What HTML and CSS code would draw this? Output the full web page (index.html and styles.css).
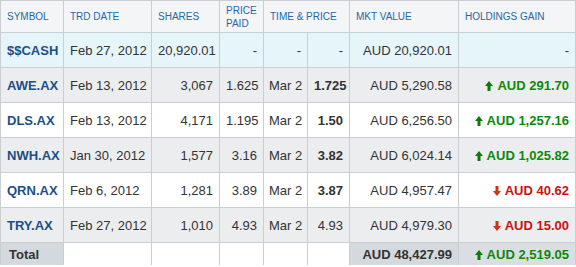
FILE: index.html
```html
<!DOCTYPE html>
<html lang="en">
<head>
  <meta charset="UTF-8">
  <title>Holdings</title>
  <link rel="stylesheet" href="styles.css">
</head>
<body>
  <table class="holdings">
    <colgroup>
      <col style="width:63px">
      <col style="width:88px">
      <col style="width:68px">
      <col style="width:44px">
      <col style="width:44px">
      <col style="width:42px">
      <col style="width:109px">
      <col style="width:117px">
    </colgroup>
    <thead>
      <tr>
        <th>Symbol</th>
        <th>Trd Date</th>
        <th>Shares</th>
        <th class="wrap">Price Paid</th>
        <th colspan="2">Time &amp; Price</th>
        <th>Mkt Value</th>
        <th>Holdings Gain</th>
      </tr>
    </thead>
    <tbody>
      <tr class="cash">
        <td class="sym">$$CASH</td>
        <td>Feb 27, 2012</td>
        <td class="num">20,920.01</td>
        <td class="num">-</td>
        <td class="num">-</td>
        <td class="num">-</td>
        <td class="num">AUD 20,920.01</td>
        <td class="num">-</td>
      </tr>
      <tr class="alt">
        <td class="sym">AWE.AX</td>
        <td>Feb 13, 2012</td>
        <td class="num">3,067</td>
        <td class="num">1.625</td>
        <td class="time">Mar 2</td>
        <td class="num strong">1.725</td>
        <td class="num">AUD 5,290.58</td>
        <td class="num gain up"><svg class="arrow" viewBox="0 0 8 10"><path d="M4 0 L8 5 L5.5 5 L5.5 10 L2.5 10 L2.5 5 L0 5 Z"/></svg>AUD 291.70</td>
      </tr>
      <tr>
        <td class="sym">DLS.AX</td>
        <td>Feb 13, 2012</td>
        <td class="num">4,171</td>
        <td class="num">1.195</td>
        <td class="time">Mar 2</td>
        <td class="num strong">1.50</td>
        <td class="num">AUD 6,256.50</td>
        <td class="num gain up"><svg class="arrow" viewBox="0 0 8 10"><path d="M4 0 L8 5 L5.5 5 L5.5 10 L2.5 10 L2.5 5 L0 5 Z"/></svg>AUD 1,257.16</td>
      </tr>
      <tr class="alt">
        <td class="sym">NWH.AX</td>
        <td>Jan 30, 2012</td>
        <td class="num">1,577</td>
        <td class="num">3.16</td>
        <td class="time">Mar 2</td>
        <td class="num strong">3.82</td>
        <td class="num">AUD 6,024.14</td>
        <td class="num gain up"><svg class="arrow" viewBox="0 0 8 10"><path d="M4 0 L8 5 L5.5 5 L5.5 10 L2.5 10 L2.5 5 L0 5 Z"/></svg>AUD 1,025.82</td>
      </tr>
      <tr>
        <td class="sym">QRN.AX</td>
        <td>Feb 6, 2012</td>
        <td class="num">1,281</td>
        <td class="num">3.89</td>
        <td class="time">Mar 2</td>
        <td class="num strong">3.87</td>
        <td class="num">AUD 4,957.47</td>
        <td class="num gain down"><svg class="arrow" viewBox="0 0 8 10"><path d="M4 10 L8 5 L5.5 5 L5.5 0 L2.5 0 L2.5 5 L0 5 Z"/></svg>AUD 40.62</td>
      </tr>
      <tr class="alt">
        <td class="sym">TRY.AX</td>
        <td>Feb 27, 2012</td>
        <td class="num">1,010</td>
        <td class="num">4.93</td>
        <td class="time">Mar 2</td>
        <td class="num">4.93</td>
        <td class="num">AUD 4,979.30</td>
        <td class="num gain down"><svg class="arrow" viewBox="0 0 8 10"><path d="M4 10 L8 5 L5.5 5 L5.5 0 L2.5 0 L2.5 5 L0 5 Z"/></svg>AUD 15.00</td>
      </tr>
    </tbody>
    <tfoot>
      <tr>
        <td class="total-label">Total</td>
        <td></td>
        <td></td>
        <td></td>
        <td></td>
        <td></td>
        <td class="num total-value">AUD 48,427.99</td>
        <td class="num gain up total-gain"><svg class="arrow" viewBox="0 0 8 10"><path d="M4 0 L8 5 L5.5 5 L5.5 10 L2.5 10 L2.5 5 L0 5 Z"/></svg>AUD 2,519.05</td>
      </tr>
    </tfoot>
  </table>
</body>
</html>
```

FILE: styles.css
```css
body {
  margin: 0;
  background: #fff;
  font-family: "Liberation Sans", Arial, sans-serif;
  color: #333;
}
.holdings {
  width: 576px;
  table-layout: fixed;
  border-collapse: collapse;
  border-top: 1px solid #7f8a94;
  border-right: 1px solid #c6ccd1;
  font-size: 13px;
}
.holdings th,
.holdings td {
  border: 1px solid #c9ced3;
  white-space: nowrap;
  overflow: hidden;
}
.holdings th {
  height: 31px;
  padding: 0 6px;
  background: #f4f5f6;
  color: #2467ad;
  font-size: 10px;
  font-weight: normal;
  text-transform: uppercase;
  text-align: left;
  line-height: 13px;
}
.holdings th.wrap {
  white-space: normal;
}
.holdings tbody td {
  height: 34px;
  padding: 0 6px;
}
.holdings tbody tr.cash td {
  background: #e5f5fa;
}
.holdings tbody tr.alt td {
  background: #ebedef;
}
.sym {
  font-weight: bold;
  color: #1b4f86;
}
.num {
  text-align: right;
}
.time {
  padding-left: 5px !important;
}
.strong {
  font-weight: bold;
}
.gain {
  font-weight: bold;
}
.gain.up {
  color: #0a8a0a;
}
.gain.down {
  color: #cc1111;
}
.arrow {
  width: 8px;
  height: 10px;
  margin-right: 4px;
  vertical-align: -1px;
}
.up .arrow {
  fill: #0a7a0a;
}
.down .arrow {
  fill: #cc3311;
}
.holdings tfoot td {
  height: 22px;
  padding: 0 6px;
  border-bottom: none;
}
.total-label {
  background: #d4d9de;
  font-weight: bold;
  padding-left: 8px !important;
}
.total-value {
  background: #d4d9de;
  font-weight: bold;
}
.total-gain {
  background: #dadee2;
}
```
